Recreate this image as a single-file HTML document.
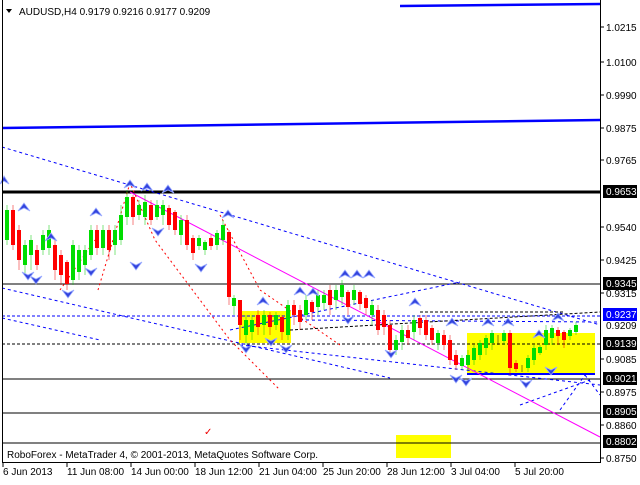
<!DOCTYPE html>
<html><head><meta charset="utf-8"><style>
body{margin:0;background:#fff;width:640px;height:480px;overflow:hidden;font-family:"Liberation Sans",sans-serif}
svg text{font-family:"Liberation Sans",sans-serif;font-size:10px}
</style></head><body>
<svg width="640" height="480" xmlns="http://www.w3.org/2000/svg">
<rect width="640" height="480" fill="#fff"/>
<!-- yellow boxes -->
<rect x="239" y="311" width="52" height="32" fill="#ffff00"/>
<rect x="467" y="333" width="128" height="42" fill="#ffff00"/>
<rect x="396" y="435" width="55" height="23" fill="#ffff00"/>
<!-- horizontal lines -->
<line x1="2" y1="192" x2="600" y2="192" stroke="#000" stroke-width="3"/>
<line x1="2" y1="284" x2="600" y2="284" stroke="#000" stroke-width="1"/>
<line x1="2" y1="379" x2="600" y2="379" stroke="#000" stroke-width="1"/>
<line x1="2" y1="413" x2="600" y2="413" stroke="#000" stroke-width="1"/>
<line x1="2" y1="443" x2="600" y2="443" stroke="#000" stroke-width="1"/>
<line x1="2" y1="344" x2="600" y2="344" stroke="#000" stroke-dasharray="3,2"/>
<line x1="2" y1="316" x2="600" y2="316" stroke="#0000ff" stroke-dasharray="3,2"/>
<line x1="467" y1="374" x2="595" y2="374" stroke="#0000ff" stroke-width="2"/>
<!-- blue solid thick lines -->
<polyline points="2,128 600,120" stroke="#0000ff" stroke-width="2.5" fill="none"/>
<polyline points="400,6 600,4" stroke="#0000ff" stroke-width="2.5" fill="none"/>
<!-- blue dashed trendlines -->
<g stroke="#0000ff" fill="none" stroke-dasharray="3,3">
<line x1="2" y1="147" x2="600" y2="325"/>
<line x1="2" y1="288" x2="390" y2="378"/>
<line x1="240" y1="345" x2="600" y2="385"/>
<line x1="230" y1="330" x2="460" y2="282"/>
<line x1="300" y1="320" x2="600" y2="322"/>
<line x1="2" y1="318" x2="100" y2="340"/>
<line x1="520" y1="405" x2="590" y2="380"/>
<line x1="560" y1="410" x2="585" y2="375"/>
<line x1="585" y1="375" x2="600" y2="395"/>
</g>
<g stroke="#000" fill="none" stroke-dasharray="3,2">
<line x1="290" y1="330" x2="600" y2="312"/>
<line x1="420" y1="312" x2="565" y2="312"/>
</g>
<!-- magenta line -->
<line x1="130" y1="192" x2="600" y2="437" stroke="#ff00ff" stroke-width="1"/>
<!-- red dotted zigzag -->
<g stroke="#ff0000" fill="none" stroke-dasharray="2,3">
<polyline points="98,290 130,183 155,240 230,340 280,390"/>
<polyline points="60,290 95,240"/>
<polyline points="220,215 260,290 340,345"/>
</g>
<!-- candles -->
<g stroke="#000" stroke-width="0.5">
<!-- format: line hi-lo, rect body -->
<g id="c">
<line x1="7" y1="205" x2="7" y2="245" stroke="#00cc00"/><rect x="5" y="210" width="4" height="30" fill="#00dd00" stroke="none"/>
<line x1="13" y1="205" x2="13" y2="250" stroke="#e00"/><rect x="11" y="210" width="4" height="35" fill="#f00" stroke="none"/>
<line x1="19" y1="225" x2="19" y2="270" stroke="#e00"/><rect x="17" y="230" width="4" height="30" fill="#f00" stroke="none"/>
<line x1="25" y1="240" x2="25" y2="275" stroke="#00cc00"/><rect x="23" y="245" width="4" height="20" fill="#00dd00" stroke="none"/>
<line x1="31" y1="235" x2="31" y2="270" stroke="#00cc00"/><rect x="29" y="240" width="4" height="15" fill="#00dd00" stroke="none"/>
<line x1="37" y1="245" x2="37" y2="270" stroke="#e00"/><rect x="35" y="250" width="4" height="15" fill="#f00" stroke="none"/>
<line x1="43" y1="230" x2="43" y2="255" stroke="#00cc00"/><rect x="41" y="235" width="4" height="15" fill="#00dd00" stroke="none"/>
<line x1="49" y1="225" x2="49" y2="255" stroke="#00cc00"/><rect x="47" y="230" width="4" height="18" fill="#00dd00" stroke="none"/>
<line x1="55" y1="240" x2="55" y2="280" stroke="#e00"/><rect x="53" y="245" width="4" height="25" fill="#f00" stroke="none"/>
<line x1="61" y1="250" x2="61" y2="285" stroke="#e00"/><rect x="59" y="255" width="4" height="20" fill="#f00" stroke="none"/>
<line x1="67" y1="260" x2="67" y2="290" stroke="#e00"/><rect x="65" y="262" width="4" height="22" fill="#f00" stroke="none"/>
<line x1="73" y1="240" x2="73" y2="285" stroke="#00cc00"/><rect x="71" y="245" width="4" height="35" fill="#00dd00" stroke="none"/>
<line x1="79" y1="245" x2="79" y2="280" stroke="#00cc00"/><rect x="77" y="250" width="4" height="22" fill="#00dd00" stroke="none"/>
<line x1="85" y1="245" x2="85" y2="275" stroke="#00cc00"/><rect x="83" y="250" width="4" height="15" fill="#00dd00" stroke="none"/>
<line x1="91" y1="225" x2="91" y2="260" stroke="#00cc00"/><rect x="89" y="230" width="4" height="25" fill="#00dd00" stroke="none"/>
<line x1="97" y1="225" x2="97" y2="255" stroke="#e00"/><rect x="95" y="230" width="4" height="18" fill="#f00" stroke="none"/>
<line x1="103" y1="225" x2="103" y2="255" stroke="#00cc00"/><rect x="101" y="230" width="4" height="18" fill="#00dd00" stroke="none"/>
<line x1="109" y1="225" x2="109" y2="260" stroke="#e00"/><rect x="107" y="230" width="4" height="20" fill="#f00" stroke="none"/>
<line x1="115" y1="225" x2="115" y2="255" stroke="#00cc00"/><rect x="113" y="230" width="4" height="15" fill="#00dd00" stroke="none"/>
<line x1="121" y1="205" x2="121" y2="245" stroke="#00cc00"/><rect x="119" y="215" width="4" height="25" fill="#00dd00" stroke="none"/>
<line x1="127" y1="190" x2="127" y2="225" stroke="#00cc00"/><rect x="125" y="197" width="4" height="20" fill="#00dd00" stroke="none"/>
<line x1="133" y1="195" x2="133" y2="225" stroke="#e00"/><rect x="131" y="197" width="4" height="20" fill="#f00" stroke="none"/>
<line x1="139" y1="200" x2="139" y2="220" stroke="#00cc00"/><rect x="137" y="205" width="4" height="10" fill="#00dd00" stroke="none"/>
<line x1="145" y1="195" x2="145" y2="225" stroke="#00cc00"/><rect x="143" y="202" width="4" height="15" fill="#00dd00" stroke="none"/>
<line x1="151" y1="200" x2="151" y2="225" stroke="#e00"/><rect x="149" y="205" width="4" height="15" fill="#f00" stroke="none"/>
<line x1="157" y1="200" x2="157" y2="220" stroke="#00cc00"/><rect x="155" y="205" width="4" height="12" fill="#00dd00" stroke="none"/>
<line x1="163" y1="200" x2="163" y2="225" stroke="#00cc00"/><rect x="161" y="205" width="4" height="10" fill="#00dd00" stroke="none"/>
<line x1="169" y1="205" x2="169" y2="230" stroke="#e00"/><rect x="167" y="208" width="4" height="17" fill="#f00" stroke="none"/>
<line x1="175" y1="210" x2="175" y2="235" stroke="#e00"/><rect x="173" y="212" width="4" height="18" fill="#f00" stroke="none"/>
<line x1="181" y1="215" x2="181" y2="245" stroke="#00cc00"/><rect x="179" y="220" width="4" height="15" fill="#00dd00" stroke="none"/>
<line x1="187" y1="215" x2="187" y2="250" stroke="#e00"/><rect x="185" y="220" width="4" height="25" fill="#f00" stroke="none"/>
<line x1="193" y1="235" x2="193" y2="260" stroke="#e00"/><rect x="191" y="238" width="4" height="15" fill="#f00" stroke="none"/>
<line x1="199" y1="235" x2="199" y2="250" stroke="#00cc00"/><rect x="197" y="238" width="4" height="8" fill="#00dd00" stroke="none"/>
<line x1="205" y1="240" x2="205" y2="255" stroke="#00cc00"/><rect x="203" y="242" width="4" height="8" fill="#00dd00" stroke="none"/>
<line x1="211" y1="235" x2="211" y2="250" stroke="#e00"/><rect x="209" y="238" width="4" height="8" fill="#f00" stroke="none"/>
<line x1="217" y1="230" x2="217" y2="250" stroke="#00cc00"/><rect x="215" y="233" width="4" height="12" fill="#00dd00" stroke="none"/>
<line x1="223" y1="220" x2="223" y2="245" stroke="#00cc00"/><rect x="221" y="225" width="4" height="15" fill="#00dd00" stroke="none"/>
<line x1="229" y1="230" x2="229" y2="305" stroke="#e00"/><rect x="227" y="232" width="4" height="65" fill="#f00" stroke="none"/>
<line x1="234" y1="295" x2="234" y2="315" stroke="#00cc00"/><rect x="232" y="298" width="4" height="8" fill="#00dd00" stroke="none"/>
<line x1="240" y1="300" x2="240" y2="340" stroke="#e00"/><rect x="238" y="300" width="4" height="25" fill="#f00" stroke="none"/>
<line x1="246" y1="315" x2="246" y2="345" stroke="#00cc00"/><rect x="244" y="320" width="4" height="15" fill="#00dd00" stroke="none"/>
<line x1="252" y1="315" x2="252" y2="340" stroke="#00cc00"/><rect x="250" y="320" width="4" height="12" fill="#00dd00" stroke="none"/>
<line x1="258" y1="310" x2="258" y2="335" stroke="#e00"/><rect x="256" y="315" width="4" height="12" fill="#f00" stroke="none"/>
<line x1="264" y1="310" x2="264" y2="335" stroke="#00cc00"/><rect x="262" y="315" width="4" height="10" fill="#00dd00" stroke="none"/>
<line x1="270" y1="312" x2="270" y2="335" stroke="#e00"/><rect x="268" y="315" width="4" height="12" fill="#f00" stroke="none"/>
<line x1="276" y1="312" x2="276" y2="330" stroke="#00cc00"/><rect x="274" y="315" width="4" height="10" fill="#00dd00" stroke="none"/>
<line x1="282" y1="315" x2="282" y2="340" stroke="#e00"/><rect x="280" y="317" width="4" height="15" fill="#f00" stroke="none"/>
<line x1="288" y1="300" x2="288" y2="340" stroke="#00cc00"/><rect x="286" y="305" width="4" height="30" fill="#00dd00" stroke="none"/>
<line x1="294" y1="300" x2="294" y2="325" stroke="#e00"/><rect x="292" y="305" width="4" height="10" fill="#f00" stroke="none"/>
<line x1="300" y1="305" x2="300" y2="330" stroke="#e00"/><rect x="298" y="310" width="4" height="12" fill="#f00" stroke="none"/>
<line x1="306" y1="295" x2="306" y2="320" stroke="#00cc00"/><rect x="304" y="300" width="4" height="15" fill="#00dd00" stroke="none"/>
<line x1="312" y1="300" x2="312" y2="320" stroke="#e00"/><rect x="310" y="302" width="4" height="10" fill="#f00" stroke="none"/>
<line x1="318" y1="290" x2="318" y2="315" stroke="#00cc00"/><rect x="316" y="295" width="4" height="12" fill="#00dd00" stroke="none"/>
<line x1="324" y1="290" x2="324" y2="310" stroke="#00cc00"/><rect x="322" y="295" width="4" height="8" fill="#00dd00" stroke="none"/>
<line x1="330" y1="285" x2="330" y2="315" stroke="#e00"/><rect x="328" y="290" width="4" height="15" fill="#f00" stroke="none"/>
<line x1="336" y1="285" x2="336" y2="310" stroke="#00cc00"/><rect x="334" y="290" width="4" height="10" fill="#00dd00" stroke="none"/>
<line x1="342" y1="280" x2="342" y2="305" stroke="#00cc00"/><rect x="340" y="285" width="4" height="12" fill="#00dd00" stroke="none"/>
<line x1="348" y1="290" x2="348" y2="315" stroke="#e00"/><rect x="346" y="292" width="4" height="15" fill="#f00" stroke="none"/>
<line x1="354" y1="285" x2="354" y2="305" stroke="#00cc00"/><rect x="352" y="290" width="4" height="10" fill="#00dd00" stroke="none"/>
<line x1="360" y1="290" x2="360" y2="310" stroke="#e00"/><rect x="358" y="292" width="4" height="12" fill="#f00" stroke="none"/>
<line x1="366" y1="295" x2="366" y2="315" stroke="#e00"/><rect x="364" y="298" width="4" height="10" fill="#f00" stroke="none"/>
<line x1="372" y1="300" x2="372" y2="325" stroke="#00cc00"/><rect x="370" y="305" width="4" height="10" fill="#00dd00" stroke="none"/>
<line x1="378" y1="305" x2="378" y2="335" stroke="#e00"/><rect x="376" y="310" width="4" height="20" fill="#f00" stroke="none"/>
<line x1="384" y1="310" x2="384" y2="335" stroke="#e00"/><rect x="382" y="315" width="4" height="12" fill="#f00" stroke="none"/>
<line x1="390" y1="320" x2="390" y2="355" stroke="#e00"/><rect x="388" y="325" width="4" height="25" fill="#f00" stroke="none"/>
<line x1="396" y1="335" x2="396" y2="355" stroke="#00cc00"/><rect x="394" y="340" width="4" height="10" fill="#00dd00" stroke="none"/>
<line x1="402" y1="325" x2="402" y2="350" stroke="#00cc00"/><rect x="400" y="330" width="4" height="12" fill="#00dd00" stroke="none"/>
<line x1="408" y1="325" x2="408" y2="345" stroke="#e00"/><rect x="406" y="330" width="4" height="8" fill="#f00" stroke="none"/>
<line x1="414" y1="315" x2="414" y2="340" stroke="#00cc00"/><rect x="412" y="320" width="4" height="12" fill="#00dd00" stroke="none"/>
<line x1="420" y1="315" x2="420" y2="335" stroke="#e00"/><rect x="418" y="318" width="4" height="10" fill="#f00" stroke="none"/>
<line x1="426" y1="315" x2="426" y2="340" stroke="#e00"/><rect x="424" y="320" width="4" height="15" fill="#f00" stroke="none"/>
<line x1="432" y1="325" x2="432" y2="345" stroke="#e00"/><rect x="430" y="328" width="4" height="12" fill="#f00" stroke="none"/>
<line x1="438" y1="330" x2="438" y2="350" stroke="#00cc00"/><rect x="436" y="333" width="4" height="10" fill="#00dd00" stroke="none"/>
<line x1="444" y1="330" x2="444" y2="350" stroke="#e00"/><rect x="442" y="335" width="4" height="10" fill="#f00" stroke="none"/>
<line x1="450" y1="335" x2="450" y2="365" stroke="#e00"/><rect x="448" y="340" width="4" height="20" fill="#f00" stroke="none"/>
<line x1="456" y1="350" x2="456" y2="370" stroke="#e00"/><rect x="454" y="355" width="4" height="10" fill="#f00" stroke="none"/>
<line x1="462" y1="355" x2="462" y2="370" stroke="#00cc00"/><rect x="460" y="358" width="4" height="8" fill="#00dd00" stroke="none"/>
<line x1="468" y1="350" x2="468" y2="370" stroke="#00cc00"/><rect x="466" y="355" width="4" height="10" fill="#00dd00" stroke="none"/>
<line x1="474" y1="345" x2="474" y2="365" stroke="#00cc00"/><rect x="472" y="348" width="4" height="12" fill="#00dd00" stroke="none"/>
<line x1="480" y1="340" x2="480" y2="360" stroke="#00cc00"/><rect x="478" y="343" width="4" height="12" fill="#00dd00" stroke="none"/>
<line x1="486" y1="335" x2="486" y2="355" stroke="#00cc00"/><rect x="484" y="338" width="4" height="10" fill="#00dd00" stroke="none"/>
<line x1="492" y1="330" x2="492" y2="350" stroke="#00cc00"/><rect x="490" y="333" width="4" height="10" fill="#00dd00" stroke="none"/>
<line x1="498" y1="335" x2="498" y2="345" stroke="#000"/>
<line x1="504" y1="330" x2="504" y2="345" stroke="#00cc00"/><rect x="502" y="333" width="4" height="8" fill="#00dd00" stroke="none"/>
<line x1="510" y1="330" x2="510" y2="375" stroke="#e00"/><rect x="508" y="333" width="4" height="35" fill="#f00" stroke="none"/>
<line x1="516" y1="360" x2="516" y2="372" stroke="#e00"/><rect x="514" y="363" width="4" height="6" fill="#f00" stroke="none"/>
<line x1="522" y1="365" x2="522" y2="372" stroke="#000"/>
<line x1="528" y1="355" x2="528" y2="372" stroke="#00cc00"/><rect x="526" y="358" width="4" height="10" fill="#00dd00" stroke="none"/>
<line x1="534" y1="345" x2="534" y2="365" stroke="#00cc00"/><rect x="532" y="348" width="4" height="12" fill="#00dd00" stroke="none"/>
<line x1="540" y1="345" x2="540" y2="355" stroke="#00cc00"/><rect x="538" y="347" width="4" height="6" fill="#00dd00" stroke="none"/>
<line x1="546" y1="325" x2="546" y2="350" stroke="#00cc00"/><rect x="544" y="330" width="4" height="15" fill="#00dd00" stroke="none"/>
<line x1="552" y1="325" x2="552" y2="345" stroke="#00cc00"/><rect x="550" y="328" width="4" height="10" fill="#00dd00" stroke="none"/>
<line x1="558" y1="327" x2="558" y2="345" stroke="#e00"/><rect x="556" y="330" width="4" height="6" fill="#f00" stroke="none"/>
<line x1="564" y1="330" x2="564" y2="348" stroke="#e00"/><rect x="562" y="332" width="4" height="8" fill="#f00" stroke="none"/>
<line x1="570" y1="328" x2="570" y2="340" stroke="#00cc00"/><rect x="568" y="330" width="4" height="6" fill="#00dd00" stroke="none"/>
<line x1="576" y1="322" x2="576" y2="335" stroke="#00cc00"/><rect x="574" y="325" width="4" height="7" fill="#00dd00" stroke="none"/>
</g></g>
<!-- fractal arrows -->
<g fill="#3344dd" stroke="#99aaff" stroke-width="0.8">
<path d="M130,180 l-6,8 l6,-3 l6,3z"/><path d="M147,183 l-6,8 l6,-3 l6,3z"/><path d="M168,185 l-6,8 l6,-3 l6,3z"/>
<path d="M4,176 l-4,8 l4,-3 l5,3z"/><path d="M24,203 l-6,8 l6,-3 l6,3z"/><path d="M96,208 l-6,8 l6,-3 l6,3z"/>
<path d="M228,210 l-6,8 l6,-3 l6,3z"/><path d="M51,233 l-6,8 l6,-3 l6,3z"/><path d="M263,297 l-6,8 l6,-3 l6,3z"/>
<path d="M300,287 l-6,8 l6,-3 l6,3z"/><path d="M313,288 l-6,8 l6,-3 l6,3z"/><path d="M345,270 l-6,8 l6,-3 l6,3z"/>
<path d="M357,270 l-6,8 l6,-3 l6,3z"/><path d="M369,270 l-6,8 l6,-3 l6,3z"/><path d="M415,298 l-6,8 l6,-3 l6,3z"/>
<path d="M452,318 l-6,8 l6,-3 l6,3z"/><path d="M488,318 l-6,8 l6,-3 l6,3z"/><path d="M508,318 l-6,8 l6,-3 l6,3z"/>
<path d="M539,330 l-6,8 l6,-3 l6,3z"/><path d="M558,313 l-6,8 l6,-3 l6,3z"/>
<path d="M22,272 l6,8 l6,-8 l-6,3z"/><path d="M30,276 l6,8 l6,-8 l-6,3z" transform="translate(0,0)"/>
<path d="M195,264 l6,8 l6,-8 l-6,3z"/><path d="M152,228 l6,8 l6,-8 l-6,3z"/><path d="M130,262 l6,8 l6,-8 l-6,3z"/>
<path d="M62,290 l6,8 l6,-8 l-6,3z"/><path d="M85,268 l6,8 l6,-8 l-6,3z"/>
<path d="M240,345 l6,8 l6,-8 l-6,3z"/><path d="M265,338 l6,8 l6,-8 l-6,3z"/><path d="M280,345 l6,8 l6,-8 l-6,3z"/>
<path d="M342,316 l6,8 l6,-8 l-6,3z"/><path d="M385,350 l6,8 l6,-8 l-6,3z"/><path d="M450,375 l6,8 l6,-8 l-6,3z"/>
<path d="M460,378 l6,8 l6,-8 l-6,3z"/><path d="M520,380 l6,8 l6,-8 l-6,3z"/><path d="M545,367 l6,8 l6,-8 l-6,3z"/>
</g>
<text x="204" y="435" fill="#e00" font-size="14">✓</text>
<!-- axes -->
<line x1="2.5" y1="0" x2="2.5" y2="462" stroke="#000"/>
<line x1="600.5" y1="0" x2="600.5" y2="462" stroke="#000"/>
<line x1="2" y1="462.5" x2="601" y2="462.5" stroke="#000"/>
<g stroke="#000"><line x1="600" y1="27" x2="604" y2="27"/><line x1="600" y1="62" x2="604" y2="62"/><line x1="600" y1="95" x2="604" y2="95"/><line x1="600" y1="128" x2="604" y2="128"/><line x1="600" y1="160" x2="604" y2="160"/><line x1="600" y1="227" x2="604" y2="227"/><line x1="600" y1="260" x2="604" y2="260"/><line x1="600" y1="293" x2="604" y2="293"/><line x1="600" y1="359" x2="604" y2="359"/><line x1="600" y1="392" x2="604" y2="392"/><line x1="600" y1="425" x2="604" y2="425"/><line x1="600" y1="458" x2="604" y2="458"/></g>
<g fill="#000">
<text x="606" y="31">1.0215</text><text x="606" y="66">1.0100</text><text x="606" y="99">0.9990</text><text x="606" y="132">0.9875</text><text x="606" y="164">0.9765</text>
<text x="606" y="231">0.9540</text><text x="606" y="264">0.9425</text><text x="606" y="297">0.9315</text><text x="606" y="329">0.9209</text>
<text x="606" y="363">0.9085</text><text x="606" y="396">0.8975</text><text x="606" y="429">0.8860</text><text x="606" y="462">0.8750</text>
</g>
<g><rect x="603" y="185" width="34" height="13" fill="#000"/><text x="606" y="195" fill="#fff">0.9653</text>
<rect x="603" y="277" width="34" height="13" fill="#000"/><text x="606" y="287" fill="#fff">0.9345</text>
<rect x="603" y="308" width="34" height="13" fill="#0000ff"/><text x="606" y="318" fill="#fff">0.9237</text>
<rect x="603" y="337" width="34" height="13" fill="#000"/><text x="606" y="347" fill="#fff">0.9139</text>
<rect x="603" y="372" width="34" height="13" fill="#000"/><text x="606" y="382" fill="#fff">0.9021</text>
<rect x="603" y="405" width="34" height="13" fill="#000"/><text x="606" y="415" fill="#fff">0.8905</text>
<rect x="603" y="435" width="34" height="13" fill="#000"/><text x="606" y="445" fill="#fff">0.8802</text></g>
<g stroke="#000"><line x1="3" y1="462" x2="3" y2="467"/><line x1="67" y1="462" x2="67" y2="467"/><line x1="131" y1="462" x2="131" y2="467"/><line x1="195" y1="462" x2="195" y2="467"/><line x1="259" y1="462" x2="259" y2="467"/><line x1="323" y1="462" x2="323" y2="467"/><line x1="387" y1="462" x2="387" y2="467"/><line x1="451" y1="462" x2="451" y2="467"/><line x1="515" y1="462" x2="515" y2="467"/></g>
<g fill="#000">
<text x="3" y="475">6 Jun 2013</text><text x="67" y="475">11 Jun 08:00</text><text x="131" y="475">14 Jun 00:00</text><text x="195" y="475">18 Jun 12:00</text><text x="259" y="475">21 Jun 04:00</text><text x="323" y="475">25 Jun 20:00</text><text x="387" y="475">28 Jun 12:00</text><text x="451" y="475">3 Jul 04:00</text><text x="515" y="475">5 Jul 20:00</text>
<text x="7" y="458">RoboForex - MetaTrader 4, © 2001-2013, MetaQuotes Software Corp.</text>
<path d="M6,9 h6 l-3,4z"/>
<text x="19" y="15">AUDUSD,H4  0.9179 0.9216 0.9177 0.9209</text>
</g>
</svg>
</body></html>
